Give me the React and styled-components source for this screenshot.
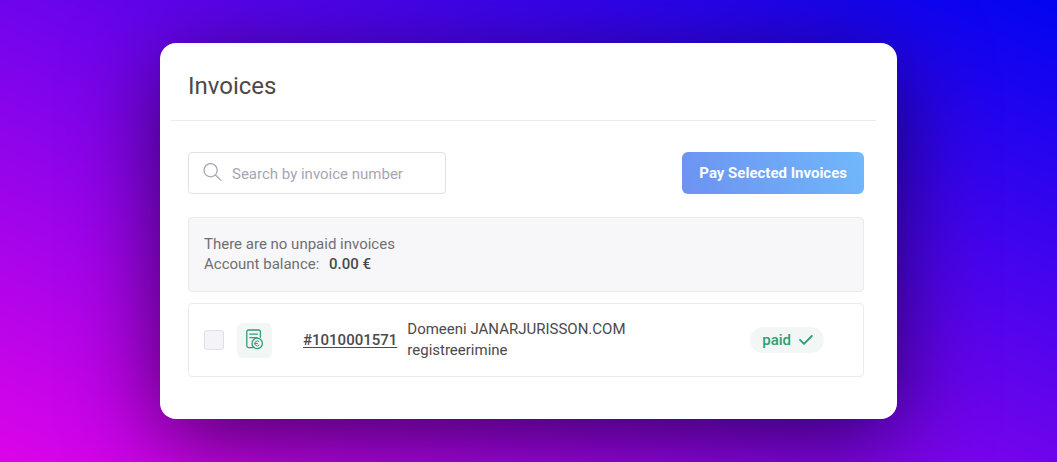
import React, { useState } from "react";
import styled, { createGlobalStyle } from "styled-components";

const invoices = [
  {
    id: "1010001571",
    description: "Domeeni JANARJURISSON.COM registreerimine",
    status: "paid",
  },
];

function InvoiceIcon() {
  return (
    <svg width="20" height="22" viewBox="0 0 20 22" fill="none" aria-hidden="true">
      <g stroke="currentColor" strokeWidth="1.3" strokeLinecap="round" strokeLinejoin="round">
        <path d="M15.4 8.2V2.8A1.8 1.8 0 0 0 13.6 1H3.6A1.8 1.8 0 0 0 1.8 2.8v14a1.8 1.8 0 0 0 1.8 1.8h4.6" />
        <path d="M4.8 5.2h7.6M4.8 8.6h7.2" />
        <circle cx="12.2" cy="14.4" r="5.2" />
        <path d="M14 12.6a2.5 2.5 0 1 0 0 3.6M9.6 14.4h3" strokeWidth="1" />
      </g>
    </svg>
  );
}

function App() {
  const [search, setSearch] = useState("");
  const [selected, setSelected] = useState([]);

  const toggle = (id) => {
    setSelected((prev) =>
      prev.includes(id) ? prev.filter((item) => item !== id) : [...prev, id]
    );
  };

  const visible = invoices.filter(({ id }) => id.includes(search.trim()));

  return (
    <>
      <GlobalStyle />
      <Page>
        <Card>
          <CardHeader>
            <Title>Invoices</Title>
          </CardHeader>

          <CardBody>
            <Toolbar>
              <SearchField>
                <svg width="20" height="20" viewBox="0 0 20 20" fill="none" aria-hidden="true">
                  <g stroke="currentColor" strokeWidth="1.3" strokeLinecap="round">
                    <circle cx="7.6" cy="7.2" r="6.6" />
                    <path d="M12.4 12l5.6 5.4" />
                  </g>
                </svg>
                <input
                  type="text"
                  aria-label="Search by invoice number"
                  placeholder="Search by invoice number"
                  value={search}
                  onChange={(e) => setSearch(e.target.value)}
                />
              </SearchField>
              <PayButton type="button" disabled={selected.length === 0}>
                Pay Selected Invoices
              </PayButton>
            </Toolbar>

            <Summary>
              <p>There are no unpaid invoices</p>
              <p>
                Account balance: <strong>0.00 €</strong>
              </p>
            </Summary>

            <InvoiceList>
              {visible.map(({ id, description, status }) => (
                <InvoiceRow key={id}>
                  <Checkbox
                    type="checkbox"
                    aria-label={`#${id}`}
                    checked={selected.includes(id)}
                    onChange={() => toggle(id)}
                  />
                  <IconTile>
                    <InvoiceIcon />
                  </IconTile>
                  <InvoiceLink href={`#${id}`}>#{id}</InvoiceLink>
                  <Description>{description}</Description>
                  <Status>
                    {status}
                    <svg width="14" height="10" viewBox="0 0 14 10" fill="none" aria-hidden="true">
                      <path
                        d="M1 4.8l4 4L12.8 1"
                        stroke="currentColor"
                        strokeWidth="1.8"
                        strokeLinecap="round"
                        strokeLinejoin="round"
                      />
                    </svg>
                  </Status>
                </InvoiceRow>
              ))}
            </InvoiceList>
          </CardBody>
        </Card>
      </Page>
    </>
  );
}

const GlobalStyle = createGlobalStyle`
  *,
  *::before,
  *::after {
    box-sizing: border-box;
  }

  body {
    margin: 0;
    font-family: Roboto, "Liberation Sans", sans-serif;
    font-size: 15px;
    color: #4a4a4a;
  }
`;

const Page = styled.main`
  min-height: 100vh;
  display: flex;
  justify-content: center;
  align-items: center;
  padding: 40px 160px;
  background: linear-gradient(to top right, #dc04e8, #0204f0);
`;

const Card = styled.section`
  flex: 1;
  max-width: 960px;
  border-radius: 16px;
  background-color: #fff;
  box-shadow: 0 20px 90px rgba(0, 0, 0, 0.6);
`;

const CardHeader = styled.header`
  margin: 0 21px 0 11px;
  padding: 29px 17px 19px;
  border-bottom: 1px solid #ebebeb;
`;

const Title = styled.h1`
  margin: 0;
  font-size: 24px;
  font-weight: 400;
  line-height: 29px;
`;

const CardBody = styled.div`
  padding: 31px 33px 42px 28px;
`;

const Toolbar = styled.div`
  display: flex;
  justify-content: space-between;
  align-items: center;
  margin-bottom: 23px;
`;

const SearchField = styled.label`
  display: flex;
  align-items: center;
  gap: 9px;
  width: 258px;
  height: 42px;
  padding: 0 14px;
  border: 1px solid #e1e1e6;
  border-radius: 4px;
  color: #a6a6b5;

  svg {
    flex: none;
  }

  input {
    flex: 1;
    min-width: 0;
    padding: 2px 0 0;
    border: none;
    outline: none;
    background: none;
    font: inherit;
    color: #4a4a4a;

    &::placeholder {
      color: #a6a6b5;
      opacity: 1;
    }
  }
`;

const PayButton = styled.button`
  height: 42px;
  padding: 0 17px;
  border: none;
  border-radius: 6px;
  background: linear-gradient(70deg, #6d92f1, #70b8fb);
  font: inherit;
  font-weight: 700;
  color: #f8fcff;
  cursor: pointer;
`;

const Summary = styled.div`
  margin-bottom: 11px;
  padding: 16px 15px 17px;
  border: 1px solid #ebebef;
  border-radius: 4px;
  background-color: #f7f7fa;
  line-height: 20px;
  color: #6f6f72;

  p {
    margin: 0;
  }

  strong {
    margin-left: 6px;
    font-weight: 500;
    color: #4a4a4a;
  }
`;

const InvoiceList = styled.ul`
  margin: 0;
  padding: 0;
  list-style: none;
`;

const InvoiceRow = styled.li`
  display: flex;
  align-items: center;
  padding: 15px 39px 15px 15px;
  border: 1px solid #ebebeb;
  border-radius: 4px;
`;

const Checkbox = styled.input`
  appearance: none;
  flex: none;
  width: 20px;
  height: 20px;
  margin: 0 13px 0 0;
  border: 1px solid #dfdfe6;
  border-radius: 3px;
  background-color: #f3f3f9;
  cursor: pointer;

  &:checked {
    background-color: #6d92f1;
  }
`;

const IconTile = styled.span`
  display: flex;
  flex: none;
  justify-content: center;
  align-items: center;
  width: 35px;
  height: 35px;
  margin-right: 31px;
  border-radius: 6px;
  background-color: #f2f7f6;
  color: #2b9f73;
`;

const InvoiceLink = styled.a`
  margin-right: 10px;
  font-weight: 500;
  color: #4a4a4a;
  text-underline-offset: 2px;
`;

const Description = styled.p`
  width: 240px;
  margin: 0 auto 0 0;
  line-height: 21px;
`;

const Status = styled.span`
  display: flex;
  align-items: center;
  gap: 8px;
  height: 26px;
  padding: 0 11px 0 12px;
  border-radius: 13px;
  background-color: #f2f7f6;
  font-weight: 500;
  color: #2b9f73;
`;

export default App;
